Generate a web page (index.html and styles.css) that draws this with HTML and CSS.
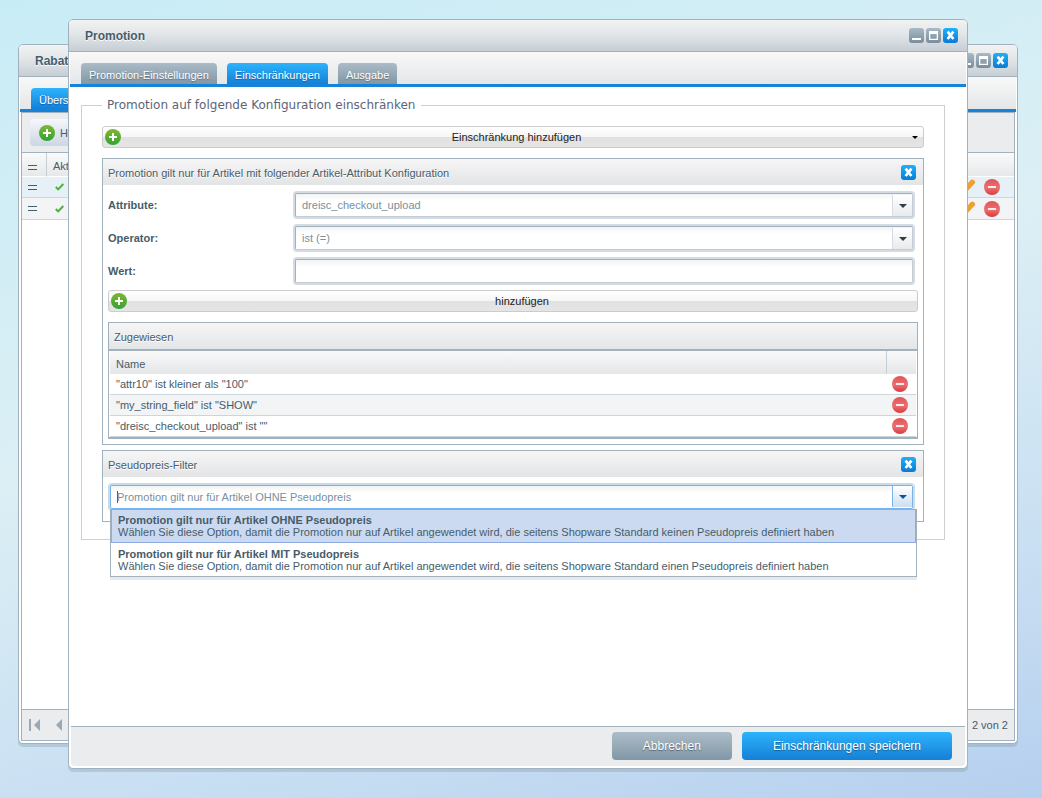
FILE: index.html
```html
<!DOCTYPE html>
<html lang="de">
<head>
<meta charset="utf-8">
<title>Promotion</title>
<link rel="stylesheet" href="styles.css">
</head>
<body>
<svg class="sprite" aria-hidden="true">
  <defs>
    <linearGradient id="green" x1="0" y1="0" x2="0" y2="1"><stop offset="0" stop-color="#7fb72f"/><stop offset="1" stop-color="#32a336"/></linearGradient>
    <linearGradient id="red" x1="0" y1="0" x2="0" y2="1"><stop offset="0" stop-color="#e35356"/><stop offset=".55" stop-color="#ea7072"/><stop offset="1" stop-color="#d53c3e"/></linearGradient>
    <symbol id="plus" viewBox="0 0 16 16"><circle cx="8" cy="8" r="8" fill="url(#green)"/><path d="M8 4v8M4 8h8" stroke="#fff" stroke-width="2"/></symbol>
    <symbol id="minus" viewBox="0 0 16 16"><circle cx="8" cy="8" r="8" fill="url(#red)"/><rect x="4" y="7" width="8" height="2" fill="#fbe9e9"/></symbol>
    <symbol id="cross" viewBox="0 0 15 15"><path d="M4.600 3.600l5.800 7.400M10.400 3.600l-5.800 7.400" stroke="#fff" stroke-width="2.700"/></symbol>
    <symbol id="mini" viewBox="0 0 15 15"><path d="M3 11h9" stroke="#fff" stroke-width="2"/></symbol>
    <symbol id="maxi" viewBox="0 0 15 15"><path fill="#fff" fill-rule="evenodd" d="M3 3h9v9H3zM4.300 6v4.700h6.400V6z"/></symbol>
    <symbol id="arrow" viewBox="0 0 8 4"><path d="M0 0h8L4 4z" fill="currentColor"/></symbol>
    <symbol id="grip" viewBox="0 0 9 5"><path d="M0 .5h9M0 4.500h9" stroke="#475c6a" stroke-width="1.200"/></symbol>
    <symbol id="check" viewBox="0 0 9 8"><path d="M.8 4l2.400 2.400L8.300 1" fill="none" stroke="#4fae3c" stroke-width="2"/></symbol>
    <symbol id="pencil" viewBox="0 0 16 16"><path d="M1 12L10.500 1.200Q12 -.4 14 1.200Q16 3 14.700 4.500L5 15L0 16z" fill="#efa02f"/></symbol>
    <symbol id="first" viewBox="0 0 12 12"><path d="M0 0h2v12H0zM11 0v12L5 6z" fill="#9aa9b5"/></symbol>
    <symbol id="prev" viewBox="0 0 6 12"><path d="M6 0v12L0 6z" fill="#9aa9b5"/></symbol>
  </defs>
</svg>

<section class="window window-back">
  <header class="titlebar">
    <h2>Rabatte</h2>
    <div class="tools">
      <button class="tool" aria-label="Minimieren"><svg><use href="#mini"/></svg></button>
      <button class="tool" aria-label="Maximieren"><svg><use href="#maxi"/></svg></button>
      <button class="tool tool-close" aria-label="Schließen"><svg><use href="#cross"/></svg></button>
    </div>
  </header>
  <nav class="tabs"><button class="tab active">Übersicht</button></nav>
  <div class="list">
    <div class="toolbar">
      <button class="add"><svg class="icon"><use href="#plus"/></svg>Hinzufügen</button>
    </div>
    <table class="overview">
      <thead><tr><th class="c-grip"><svg class="grip"><use href="#grip"/></svg></th><th>Aktiv</th><th class="c-actions"></th></tr></thead>
      <tbody>
        <tr class="hover"><td><svg class="grip"><use href="#grip"/></svg></td><td class="c-check"><svg class="check"><use href="#check"/></svg></td>
          <td><div class="actions"><button class="plain" aria-label="Bearbeiten"><svg class="icon"><use href="#pencil"/></svg></button><button class="plain" aria-label="Löschen"><svg class="icon"><use href="#minus"/></svg></button></div></td></tr>
        <tr><td><svg class="grip"><use href="#grip"/></svg></td><td class="c-check"><svg class="check"><use href="#check"/></svg></td>
          <td><div class="actions"><button class="plain" aria-label="Bearbeiten"><svg class="icon"><use href="#pencil"/></svg></button><button class="plain" aria-label="Löschen"><svg class="icon"><use href="#minus"/></svg></button></div></td></tr>
      </tbody>
    </table>
    <footer class="pager">
      <button class="plain" aria-label="Erste Seite"><svg class="first"><use href="#first"/></svg></button>
      <button class="plain" aria-label="Vorherige Seite"><svg class="prev"><use href="#prev"/></svg></button>
      <span class="count">2 von 2</span>
    </footer>
  </div>
</section>

<section class="window window-front">
  <header class="titlebar">
    <h2>Promotion</h2>
    <div class="tools">
      <button class="tool" aria-label="Minimieren"><svg><use href="#mini"/></svg></button>
      <button class="tool" aria-label="Maximieren"><svg><use href="#maxi"/></svg></button>
      <button class="tool tool-close" aria-label="Schließen"><svg><use href="#cross"/></svg></button>
    </div>
  </header>
  <nav class="tabs">
    <button class="tab">Promotion-Einstellungen</button>
    <button class="tab active">Einschränkungen</button>
    <button class="tab">Ausgabe</button>
  </nav>
  <main class="content">
    <fieldset class="restrictions">
      <legend>Promotion auf folgende Konfiguration einschränken</legend>
      <div class="stack">
        <button class="bar bar-menu"><svg class="icon"><use href="#plus"/></svg><span>Einschränkung hinzufügen</span><svg class="caret"><use href="#arrow"/></svg></button>

        <section class="panel panel-first">
          <header class="panel-head">
            <h3>Promotion gilt nur für Artikel mit folgender Artikel-Attribut Konfiguration</h3>
            <button class="tool tool-close" aria-label="Entfernen"><svg><use href="#cross"/></svg></button>
          </header>
          <div class="panel-body">
            <div class="field">
              <label for="attr">Attribute:</label>
              <div class="control"><select id="attr"><option>dreisc_checkout_upload</option></select><span class="trigger"><svg><use href="#arrow"/></svg></span></div>
            </div>
            <div class="field">
              <label for="op">Operator:</label>
              <div class="control"><select id="op"><option>ist (=)</option></select><span class="trigger"><svg><use href="#arrow"/></svg></span></div>
            </div>
            <div class="field">
              <label for="wert">Wert:</label>
              <div class="control"><input id="wert" type="text"></div>
            </div>
            <button class="bar bar-add"><svg class="icon"><use href="#plus"/></svg><span>hinzufügen</span></button>
            <section class="assigned">
              <h3>Zugewiesen</h3>
              <table>
                <thead><tr><th>Name</th><th class="c-delete"></th></tr></thead>
                <tbody>
                  <tr><td>"attr10" ist kleiner als "100"</td><td><button class="plain" aria-label="Löschen"><svg class="icon"><use href="#minus"/></svg></button></td></tr>
                  <tr><td>"my_string_field" ist "SHOW"</td><td><button class="plain" aria-label="Löschen"><svg class="icon"><use href="#minus"/></svg></button></td></tr>
                  <tr><td>"dreisc_checkout_upload" ist ""</td><td><button class="plain" aria-label="Löschen"><svg class="icon"><use href="#minus"/></svg></button></td></tr>
                </tbody>
              </table>
            </section>
          </div>
        </section>

        <section class="panel panel-second">
          <header class="panel-head">
            <h3>Pseudopreis-Filter</h3>
            <button class="tool tool-close" aria-label="Entfernen"><svg><use href="#cross"/></svg></button>
          </header>
          <div class="panel-body">
            <div class="combo">
              <div class="control focused"><input type="text" role="combobox" aria-label="Pseudopreis-Filter" aria-expanded="true" aria-controls="options" value="Promotion gilt nur für Artikel OHNE Pseudopreis"><button class="trigger" aria-label="Auswahl öffnen"><svg><use href="#arrow"/></svg></button></div>
              <ul class="options" id="options" role="listbox">
                <li role="option" aria-selected="true"><strong>Promotion gilt nur für Artikel OHNE Pseudopreis</strong><span>Wählen Sie diese Option, damit die Promotion nur auf Artikel angewendet wird, die seitens Shopware Standard keinen Pseudopreis definiert haben</span></li>
                <li role="option" aria-selected="false"><strong>Promotion gilt nur für Artikel MIT Pseudopreis</strong><span>Wählen Sie diese Option, damit die Promotion nur auf Artikel angewendet wird, die seitens Shopware Standard einen Pseudopreis definiert haben</span></li>
              </ul>
            </div>
          </div>
        </section>
      </div>
    </fieldset>
  </main>
  <footer class="footer">
    <button class="action">Abbrechen</button>
    <button class="action primary">Einschränkungen speichern</button>
  </footer>
</section>
</body>
</html>
```
FILE: styles.css
```css
* { box-sizing: border-box; }

body {
  margin: 0;
  height: 100vh;
  overflow: hidden;
  position: relative;
  background: linear-gradient(165deg, #c8ecf6 0%, #dceff5 45%, #c8def2 78%, #b5cfee 100%);
  color: #475c6a;
  font: 11px/14px "Liberation Sans", Arial, sans-serif;
}

button, input, select { font: inherit; color: inherit; margin: 0; border: 0; padding: 0; background: none; }
h2, h3, ul { margin: 0; padding: 0; list-style: none; }
svg { display: block; }
table { border-collapse: separate; border-spacing: 0; width: 100%; table-layout: fixed; }
th { font-weight: normal; text-align: left; }
td, th { padding: 0; }

.sprite { position: absolute; width: 0; height: 0; }
.icon { width: 16px; height: 16px; flex: none; }
.plain { display: block; }

/* windows */
.window {
  position: absolute;
  display: flex;
  flex-direction: column;
  background: #fff;
  border: 1px solid #a1b2be;
  border-radius: 5px;
  box-shadow: 0 3px 0 rgba(120, 145, 165, .3);
}
.window-back { inset: 44px 24px 54px 18px; padding-bottom: 2px; }
.window-front { inset: 19px 74px 29px 68px; padding-bottom: 2px; }

.titlebar {
  display: flex;
  align-items: center;
  justify-content: space-between;
  height: 32px;
  flex: none;
  padding: 0 9px 0 16px;
  border-bottom: 1px solid #a1b2be;
  border-radius: 4px 4px 0 0;
  background: linear-gradient(#f1f2f2, #e3e6e8 45%, #c5ced5);
}
.titlebar h2 { font-size: 12px; font-weight: bold; text-shadow: 0 1px 0 #fff; }
.tools { display: flex; gap: 2px; }
.tool {
  width: 15px;
  height: 15px;
  border-radius: 3px;
  background: linear-gradient(#a9b9c5, #788d9d);
}
.tool svg { width: 15px; height: 15px; }
.tool-close { background: linear-gradient(#1eb0fb, #0a7bd6); }

.tabs {
  display: flex;
  align-items: flex-end;
  gap: 10px;
  height: 35px;
  flex: none;
  margin: 0 1px;
  padding: 0 11px;
  border-bottom: 3px solid #1783d8;
  background: linear-gradient(#f8f8f8, #e4e6e8);
}
.tab {
  height: 21px;
  padding: 3px 8px 0;
  border-radius: 4px 4px 0 0;
  background: linear-gradient(#abbbc7, #8197a6);
  color: #fff;
  text-shadow: 0 1px 1px rgba(40, 65, 85, .5);
}
.tab.active { background: linear-gradient(#2db3fc, #1580d6); text-shadow: 0 1px 1px #0a5fb8; }

/* overview list */
.list {
  flex: 1;
  display: flex;
  flex-direction: column;
  margin: 0 2px;
  border: 1px solid #a1b2be;
}
.toolbar { height: 40px; padding: 6px 8px; background: #ebecee; border-bottom: 1px solid #a1b2be; }
.add {
  display: flex;
  align-items: center;
  gap: 5px;
  height: 27px;
  padding: 0 9px;
  border-radius: 4px;
  background: linear-gradient(#f5f7fb, #ccd6e3);
}
.overview thead tr { background: linear-gradient(#fafafa, #e5e7e9); }
.overview th { height: 24px; padding: 3px 6px 0; border-bottom: 1px solid #fff; }
.overview th.c-grip { padding-top: 6px; }
.overview th + th { border-left: 1px solid #c5ced5; }
.overview th.c-actions { border-left: 0; }
.c-grip { width: 24px; }
.c-actions { width: 58px; }
.overview tbody tr { background: #f2f4f6; }
.overview tbody tr.hover { background: #e5f0f7; }
.overview td { height: 22px; padding: 0 6px; border-bottom: 1px solid #cdd5dc; }
.overview .hover td { height: 21px; border-color: #c6d9e8; }
.overview td.c-check { padding: 0 9px; }
.grip { width: 9px; height: 5px; }
.check { width: 9px; height: 8px; }
.actions { display: flex; gap: 8px; }
.overview td:last-child { padding: 0 4px; }
.pager {
  display: flex;
  align-items: center;
  gap: 15px;
  height: 31px;
  margin-top: auto;
  padding: 0 6px 0 7px;
  border-top: 1px solid #a1b2be;
  background: #ebecee;
}
.first { width: 12px; height: 12px; }
.prev { width: 6px; height: 12px; }
.count { margin-left: auto; }

/* form */
.content { flex: 1; padding: 10px 22px 0 12px; }
.restrictions { margin: 0; min-width: 0; padding: 12px 20px 17px; border: 1px solid #ccd0d3; }
.restrictions legend {
  padding: 0 6px 0 5px;
  font: 12px/17px "DejaVu Sans", sans-serif;
  color: #5c6478;
}
.stack { display: flex; flex-direction: column; }

.bar {
  display: flex;
  align-items: center;
  width: 100%;
  height: 22px;
  padding: 0 5px 0 2px;
  border: 1px solid #ccc;
  border-radius: 3px;
  background: linear-gradient(#fff, #f6f6f6 50%, #e1e1e1 50%, #e5e5e5);
  color: #222;
}
.bar span { flex: 1; text-align: center; }
.bar-add { padding-right: 0; }
.caret { width: 6px; height: 3px; color: #000; }

.panel { border: 1px solid #a1b2be; }
.panel-first { margin-top: 10px; }
.panel-second { margin-top: 5px; }
.panel-head {
  display: flex;
  align-items: center;
  justify-content: space-between;
  height: 26px;
  padding: 2px 7px 0 5px;
  background: linear-gradient(#f6f6f7, #e3e4e6);
}
.panel-head h3, .assigned h3 { font-size: 11px; font-weight: normal; text-shadow: 0 1px 0 #fff; }
.panel-head .tool { margin-bottom: 1px; }
.panel-body { padding: 6px 5px 5px; }
.panel-second .panel-body { padding-bottom: 10px; }

.field { display: grid; grid-template-columns: 185px 1fr; align-items: center; margin: 0 3px 5px 0; }
.field label { font-weight: bold; }

.control {
  display: flex;
  height: 28px;
  border: 2px solid #d5dbe2;
  border-radius: 4px;
  background: linear-gradient(#f0f2f2, #fff 8px);
  color: #7b8f9e;
  position: relative;
}
.control input, .control select {
  flex: 1;
  min-width: 0;
  appearance: none;
  padding: 0 6px;
  border: 1px solid #c3ccd4;
  border-top-color: #a1b2be;
  border-left-color: #a1b2be;
  border-radius: 2px;
  outline: 0;
}
.trigger {
  position: absolute;
  inset: 2px 1px 1px auto;
  width: 20px;
  display: grid;
  place-items: center;
  border-left: 1px solid #d5dbe2;
  background: linear-gradient(#fff, #e8eaec);
  color: #2f3d47;
  pointer-events: none;
}
.trigger svg { width: 8px; height: 4px; }

.assigned { margin-top: 10px; border: 1px solid #a1b2be; border-bottom-width: 2px; }
.assigned h3 {
  height: 28px;
  padding: 7px 5px 0;
  border-bottom: 2px solid #a1b2be;
  background: linear-gradient(#f6f6f7, #e3e5e6);
}
.assigned table { border: solid #fff; border-width: 0 1px; }
.assigned thead tr { background: linear-gradient(#f9f9f9, #e4e6e8); }
.assigned th { height: 23px; padding: 3px 6px 0; }
.assigned th.c-delete { width: 30px; border-left: 1px solid #c5ced5; }
.assigned td { height: 21px; padding: 0 6px; border-bottom: 1px solid #ccd5dc; }
.assigned tbody tr:nth-child(2) { background: #f2f4f6; }

.combo { position: relative; margin-right: 3px; }
.control.focused { border-color: #c9dbea #d5dbe2 #d5dbe2 #c9dbea; }
.control.focused input {
  border-color: #77b4ec;
  background: linear-gradient(#475c6a, #475c6a) 6px 5px / 1px 12px no-repeat;
}
.control.focused .trigger {
  inset: 1px 1px 2px auto;
  border-left-color: #77b4ec;
  background: linear-gradient(#fff, #cddff0);
  color: #0d5596;
}
.options {
  position: absolute;
  z-index: 2;
  inset: 26px -2px auto 2px;
  border: 1px solid #a1b2be;
  border-top: 0;
  background: #fff;
  box-shadow: 0 3px 0 rgba(0, 0, 0, .09);
}
.options li { display: flex; flex-direction: column; padding: 4px 6px; border: 1px solid transparent; line-height: 12px; }
.options li[aria-selected="true"] { background: #cbdaf0; border-color: #8eabe4; }
.options li:last-child { padding-bottom: 4px; border-bottom: 0; }

/* footer */
.footer {
  display: flex;
  justify-content: flex-end;
  align-items: flex-start;
  gap: 10px;
  height: 40px;
  margin: 0 2px;
  padding: 5px 13px 0;
  border-top: 1px solid #a1b2be;
  border-radius: 0 0 4px 4px;
  background: #ebecee;
}
.action {
  height: 28px;
  padding: 0 31px;
  border-radius: 4px;
  background: linear-gradient(#adbdc8, #8197a6);
  color: #fff;
  font-size: 12px;
  text-shadow: 0 1px 1px rgba(30, 55, 75, .6);
}
.action.primary { background: linear-gradient(#2db3fc, #1580d6); }
```
